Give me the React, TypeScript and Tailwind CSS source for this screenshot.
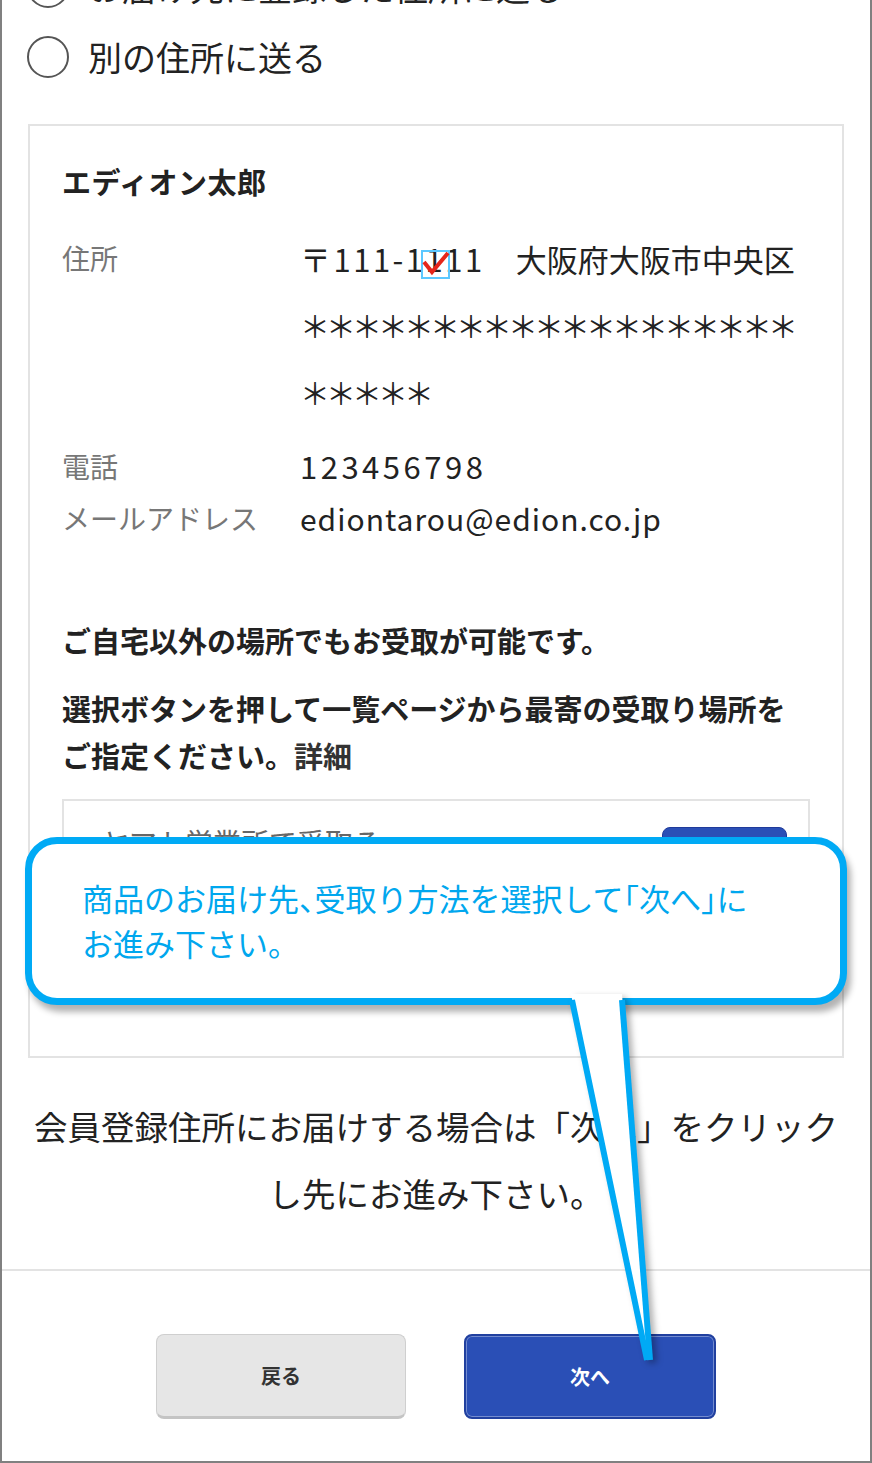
import React from 'react';

const Radio: React.FC<{ label: string }> = ({ label }) => (
  <div className="flex items-center h-[70px] pl-[25px]">
    <span className="w-[42px] h-[42px] rounded-full border-[2.5px] border-[#555] bg-white shrink-0" />
    <span className="ml-[19px] text-[34px] leading-[40px] text-[#222]">{label}</span>
  </div>
);

const App: React.FC = () => {
  return (
    <div className="relative w-[872px] h-[1463px] overflow-hidden bg-white border-x-2 border-b-2 border-[#808080] font-['Noto_Sans_CJK_JP',sans-serif] text-[#222]">
      <div className="-mt-[48px]">
        <Radio label="お届け先に登録した住所に送る" />
        <Radio label="別の住所に送る" />
      </div>

      <div className="mt-[32px] mx-[26px] border-2 border-[#e3e3e3] pt-[35px] px-[32px] pb-[145px]">
        <h2 className="text-[29px] font-bold leading-[40px] tracking-[0.5px] text-[#222]">エディオン太郎</h2>

        <div className="mt-[24px] flex">
          <div className="w-[238px] shrink-0 text-[28px] leading-[67px] text-[#777]">住所</div>
          <div className="text-[31px] leading-[67px] text-[#222]">
            <span className="block">
              <span className="tracking-[2.5px]">〒111-1111</span>　大阪府大阪市中央区
            </span>
            <span className="block text-[30px] tracking-[-4px]">＊＊＊＊＊＊＊＊＊＊＊＊＊＊＊＊＊＊＊</span>
            <span className="block text-[30px] tracking-[-4px]">＊＊＊＊＊</span>
          </div>
        </div>
        <div className="mt-[14px] flex">
          <div className="w-[238px] shrink-0 text-[28px] leading-[52px] text-[#777]">電話</div>
          <div className="text-[31px] leading-[52px] tracking-[3.5px]">123456798</div>
        </div>
        <div className="flex">
          <div className="w-[238px] shrink-0 text-[28px] leading-[52px] text-[#777]">メールアドレス</div>
          <div className="text-[30px] leading-[52px] tracking-[1px]">ediontarou@edion.co.jp</div>
        </div>

        <p className="mt-[73px] text-[29px] font-bold leading-[47px]">ご自宅以外の場所でもお受取が可能です。</p>
        <p className="mt-[21px] text-[29px] font-bold leading-[47px]">
          選択ボタンを押して一覧ページから最寄の受取り場所をご指定ください。<span className="text-[#333]">詳細</span>
        </p>

        <div className="mt-[20px] border-2 border-[#e3e3e3] flex justify-between pl-[37px] pr-[21px] py-[26px]">
          <span className="self-start -mt-[5px] text-[28px] leading-[40px] text-[#666]">ヤマト営業所で受取る</span>
          <button className="w-[125px] h-[56px] rounded-[8px] bg-[#2a4fb6] border border-[#1f3a9a] text-white text-[20px] font-bold">
            選択
          </button>
        </div>
      </div>

      <p className="mt-[34px] mx-[26px] text-center text-[33.5px] leading-[67px] text-[#222]">
        会員登録住所にお届けする場合は「次へ」をクリックし先にお進み下さい。
      </p>

      <div className="mt-[43px] border-t-2 border-[#e3e3e3] pt-[63px] flex justify-center gap-[58px]">
        <button className="w-[250px] h-[85px] rounded-[8px] bg-[#e6e6e6] border border-[#cfcfcf] border-b-[3px] border-b-[#c4c4c4] text-[20px] font-bold text-[#333]">
          戻る
        </button>
        <button className="w-[252px] h-[85px] rounded-[8px] bg-[#2a4fb6] border-2 border-[#21409f] shadow-[inset_0_0_0_1px_rgba(255,255,255,0.35)] text-[20px] font-bold text-white">
          次へ
        </button>
      </div>

      {/* check mark overlay on postcode */}
      <div className="absolute left-[419px] top-[250px] w-[29px] h-[29px] border-2 border-[#5cc8ff]">
        <svg width="29" height="29" viewBox="0 0 29 29" className="absolute -left-[2px] -top-[2px]">
          <path d="M3 12 L11 22 L27 3" fill="none" stroke="#e5261a" strokeWidth="4" strokeLinejoin="miter" />
        </svg>
      </div>

      {/* callout */}
      <div className="absolute left-[23px] top-[837px] w-[822px] h-[168px] rounded-[32px] border-[7px] border-[#00aaf5] bg-white shadow-[4px_7px_6px_rgba(0,0,0,0.3)] pl-[50px] pt-[31px]">
        <p className="text-[31px] leading-[45px] text-[#00a7ee] [font-feature-settings:'halt']">
          商品のお届け先、受取り方法を選択して「次へ」に
          <br />
          お進み下さい。
        </p>
      </div>
      <svg
        width="110"
        height="380"
        viewBox="0 0 110 380"
        className="absolute left-[558px] top-[990px] [filter:drop-shadow(4px_3px_3px_rgba(0,0,0,0.3))]"
      >
        <polygon points="11,4 87,370 90,370 62,4" fill="#fff" />
        <line x1="12" y1="10" x2="87" y2="370" stroke="#00aaf5" strokeWidth="6" />
        <line x1="62" y1="10" x2="90" y2="370" stroke="#00aaf5" strokeWidth="6" />
      </svg>
    </div>
  );
};

export default App;
